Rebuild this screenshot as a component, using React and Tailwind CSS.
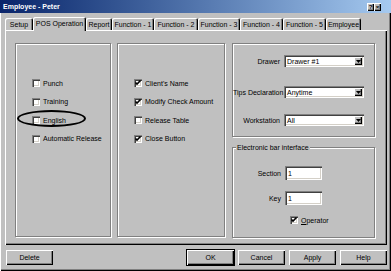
import React from "react";

const raised = "shadow-[inset_1px_1px_0_#ffffff,inset_-1px_-1px_0_#000000,inset_-2px_-2px_0_#808080]";
const sunken = "shadow-[inset_1px_1px_0_#808080,inset_2px_2px_0_#404040,inset_-1px_-1px_0_#ffffff,inset_-2px_-2px_0_#d4d0c8]";
const etched = "border border-[#808080] shadow-[inset_1px_1px_0_#ffffff,1px_1px_0_#ffffff]";

function Check({ checked }) {
  return (
    <div className={`w-[8px] h-[8px] bg-white ${sunken} relative shrink-0`}>
      {checked && (
        <svg className="absolute left-0 top-0" width="8" height="8" viewBox="0 0 8 8">
          <path d="M1.5 3.5 L3 5 L6.5 1.5" stroke="#000" strokeWidth="1.6" fill="none" />
        </svg>
      )}
    </div>
  );
}

function CheckRow({ checked, label }) {
  return (
    <div className="flex items-center gap-[3px] h-[8px]">
      <Check checked={checked} />
      <span className="whitespace-nowrap">{label}</span>
    </div>
  );
}

function Select({ value }) {
  return (
    <div className={`w-[80px] h-[12px] bg-white ${sunken} flex items-center pl-[3px] pr-[2px]`}>
      <span className="flex-1 whitespace-nowrap">{value}</span>
      <div className={`w-[8px] h-[8px] bg-[#c0c0c0] ${raised} flex items-center justify-center`}>
        <svg width="5" height="3" viewBox="0 0 5 3">
          <path d="M0 0 H5 L2.5 3 Z" fill="#000" />
        </svg>
      </div>
    </div>
  );
}

function Button({ label, def, className = "" }) {
  return (
    <div
      className={`w-[47px] h-[15px] bg-[#c0c0c0] ${raised} flex items-center justify-center ${def ? "outline outline-1 outline-black" : ""} ${className}`}
    >
      {label}
    </div>
  );
}

const tabs = [
  ["Setup", 28],
  ["POS Operation", 53, true],
  ["Report", 26],
  ["Function - 1", 42],
  ["Function - 2", 44],
  ["Function - 3", 42],
  ["Function - 4", 43],
  ["Function - 5", 43],
  ["Employee", 35],
];

export default function App() {
  return (
    <div className="w-[391px] h-[271px] bg-[#c0c0c0] overflow-hidden font-['Liberation_Sans',Arial,sans-serif] text-[7px] leading-none text-black relative shadow-[inset_1px_0_0_#ffffff,inset_-1px_-1px_0_#000000,inset_-2px_-2px_0_#808080]">
      {/* title bar */}
      <div className="h-[13px] bg-gradient-to-r from-[#0a246a] to-[#a6caf0] flex items-center justify-between pl-[3px] pr-[10px]">
        <span className="text-white font-bold text-[7px]">Employee - Peter</span>
        <div className="flex gap-[0px]">
          <div className={`w-[7px] h-[8px] bg-[#c0c0c0] ${raised} flex items-center justify-center font-bold text-[6px]`}>?</div>
          <div className={`w-[7px] h-[8px] bg-[#c0c0c0] ${raised} flex items-center justify-center font-bold text-[6px]`}>×</div>
        </div>
      </div>

      {/* tabs */}
      <div className="flex items-end h-[13px] mt-[4px] ml-[5px] relative z-10">
        {tabs.map(([t, w, sel]) => (
          <div
            key={t}
            style={{ width: w }}
            className={
              sel
                ? "h-[14px] -mb-[1px] bg-[#c0c0c0] rounded-t-[2px] shadow-[inset_1px_1px_0_#ffffff,inset_-1px_0_0_#000000,inset_-2px_0_0_#808080] flex items-center justify-center whitespace-nowrap pb-[1px]"
                : "h-[12px] bg-[#c0c0c0] rounded-t-[2px] shadow-[inset_1px_1px_0_#ffffff,inset_-1px_0_0_#000000,inset_-2px_0_0_#808080] flex items-center justify-center whitespace-nowrap"
            }
          >
            {t}
          </div>
        ))}
      </div>

      {/* panel */}
      <div className="ml-[5px] w-[382px] h-[215px] shadow-[inset_1px_1px_0_#ffffff,inset_-1px_-1px_0_#000000,inset_-2px_-2px_0_#808080] flex gap-[6px] pl-[10px] pt-[13px]">
        {/* group 1 */}
        <div className={`w-[96px] h-[194px] ${etched} flex flex-col gap-[10.5px] pl-[16px] pt-[35px]`}>
          <CheckRow label="Punch" />
          <CheckRow label="Training" />
          <div className="relative">
            <CheckRow label="English" />
            <div className="absolute left-[-15px] top-[-6px] w-[69px] h-[17px] rounded-[50%] border-[2px] border-black" />
          </div>
          <CheckRow label="Automatic Release" />
        </div>
        {/* group 2 */}
        <div className={`w-[108px] h-[194px] ${etched} flex flex-col gap-[10.5px] pl-[16px] pt-[35px]`}>
          <CheckRow checked label="Client's Name" />
          <CheckRow checked label="Modify Check Amount" />
          <CheckRow label="Release Table" />
          <CheckRow checked label="Close Button" />
        </div>
        {/* right column */}
        <div className="w-[143px] flex flex-col ml-[1px]">
          <div className={`h-[94px] ${etched} flex flex-col pt-[11px]`}>
            <div className="flex items-center">
              <span className="w-[51px] text-right pr-[4px]">Drawer</span>
              <Select value="Drawer #1" />
            </div>
            <div className="flex items-center mt-[19px]">
              <span className="w-[51px] text-right pr-[4px] whitespace-nowrap">Tips Declaration</span>
              <Select value="Anytime" />
            </div>
            <div className="flex items-center mt-[16px]">
              <span className="w-[51px] text-right pr-[4px]">Workstation</span>
              <Select value="All" />
            </div>
          </div>
          <div className={`h-[91px] mt-[10px] ${etched} relative flex flex-col pt-[18px]`}>
            <span className="absolute left-[3px] top-[-4px] bg-[#c0c0c0] px-[1px]">Electronic bar interface</span>
            <div className="flex items-center">
              <span className="w-[52px] text-right pr-[4px]">Section</span>
              <div className={`w-[37px] h-[14px] bg-white ${sunken} flex items-center pl-[3px]`}>1</div>
            </div>
            <div className="flex items-center mt-[11px]">
              <span className="w-[52px] text-right pr-[4px]">Key</span>
              <div className={`w-[37px] h-[14px] bg-white ${sunken} flex items-center pl-[3px]`}>1</div>
            </div>
            <div className="flex items-center gap-[3px] mt-[11px] ml-[57px]">
              <Check checked />
              <span><span className="underline">O</span>perator</span>
            </div>
          </div>
        </div>
      </div>

      {/* buttons */}
      <div className="flex mt-[5px] pl-[6px]">
        <Button label="Delete" />
        <div className="flex gap-[4px] ml-[134px]">
          <Button label="OK" def />
          <Button label="Cancel" />
          <Button label="Apply" />
          <Button label="Help" />
        </div>
      </div>
    </div>
  );
}
